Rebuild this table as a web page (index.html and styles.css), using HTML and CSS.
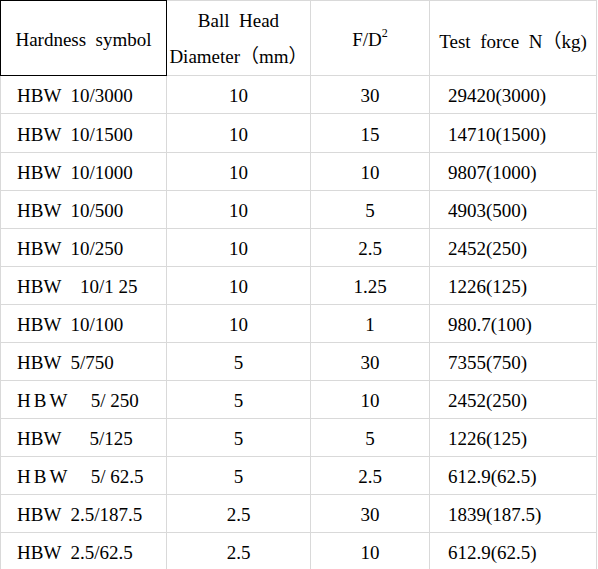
FILE: index.html
```html
<!DOCTYPE html>
<html lang="en">
<head>
<meta charset="utf-8">
<title>Hardness symbol table</title>
<link rel="stylesheet" href="styles.css">
</head>
<body>
<table class="spec">
<thead>
<tr>
<th class="c1 first">Hardness  symbol</th>
<th class="c2 two">Ball  Head<br>Diameter（mm）</th>
<th class="c3">F/D<sup class="sq">2</sup></th>
<th class="c4">Test  force  N（kg)</th>
</tr>
</thead>
<tbody>
<tr><td class="c1">HBW  10/3000</td><td class="c2">10</td><td class="c3">30</td><td class="c4">29420(3000)</td></tr>
<tr class="tall"><td class="c1">HBW  10/1500</td><td class="c2">10</td><td class="c3">15</td><td class="c4">14710(1500)</td></tr>
<tr><td class="c1">HBW  10/1000</td><td class="c2">10</td><td class="c3">10</td><td class="c4">9807(1000)</td></tr>
<tr><td class="c1">HBW  10/500</td><td class="c2">10</td><td class="c3">5</td><td class="c4">4903(500)</td></tr>
<tr><td class="c1">HBW  10/250</td><td class="c2">10</td><td class="c3">2.5</td><td class="c4">2452(250)</td></tr>
<tr><td class="c1">HBW    10/1 25</td><td class="c2">10</td><td class="c3">1.25</td><td class="c4">1226(125)</td></tr>
<tr><td class="c1">HBW  10/100</td><td class="c2">10</td><td class="c3">1</td><td class="c4">980.7(100)</td></tr>
<tr><td class="c1">HBW  5/750</td><td class="c2">5</td><td class="c3">30</td><td class="c4">7355(750)</td></tr>
<tr><td class="c1"><span class="spread">HB</span>W     5/ 250</td><td class="c2">5</td><td class="c3">10</td><td class="c4">2452(250)</td></tr>
<tr><td class="c1">HBW      5/125</td><td class="c2">5</td><td class="c3">5</td><td class="c4">1226(125)</td></tr>
<tr><td class="c1"><span class="spread">HB</span>W     5/ 62.5</td><td class="c2">5</td><td class="c3">2.5</td><td class="c4">612.9(62.5)</td></tr>
<tr><td class="c1">HBW  2.5/187.5</td><td class="c2">2.5</td><td class="c3">30</td><td class="c4">1839(187.5)</td></tr>
<tr><td class="c1">HBW  2.5/62.5</td><td class="c2">2.5</td><td class="c3">10</td><td class="c4">612.9(62.5)</td></tr>
</tbody>
</table>
</body>
</html>
```
FILE: styles.css
```css
body {
  margin: 0;
  background: #ffffff;
}

.spec {
  border-collapse: separate;
  border-spacing: 0;
  table-layout: fixed;
  width: 597px;
  font-family: "Liberation Serif", "Noto Sans CJK SC", serif;
  font-size: 19px;
  color: #000000;
}

.spec th,
.spec td {
  box-sizing: border-box;
  padding: 0;
  border-right: 1px solid #d9d9d9;
  border-bottom: 1px solid #d9d9d9;
  white-space: pre;
  font-weight: normal;
  text-align: center;
  vertical-align: middle;
  overflow: hidden;
}

.spec th {
  border-top: 1px solid #d9d9d9;
  height: 76px;
  padding-top: 3px;
  line-height: normal;
}

.spec .c1 {
  width: 167px;
  border-left: 1px solid #d9d9d9;
}

.spec .c2 {
  width: 144px;
}

.spec .c3 {
  width: 119px;
}

.spec .c4 {
  width: 167px;
}

.spec th.first {
  border: 1px solid #000000;
}

.spec th.two {
  padding-top: 1px;
  line-height: 36px;
}

.sq {
  font-size: 12px;
  line-height: 0;
  vertical-align: 9px;
}

.spec td {
  height: 38px;
  padding: 3px 0 0;
  line-height: 34px;
}

.spec tr.tall td {
  height: 39px;
}

.spec td.c1 {
  text-align: left;
  padding-left: 16px;
}

.spec td.c4 {
  text-align: left;
  padding-left: 18px;
}

.spread {
  letter-spacing: 3px;
}
```
